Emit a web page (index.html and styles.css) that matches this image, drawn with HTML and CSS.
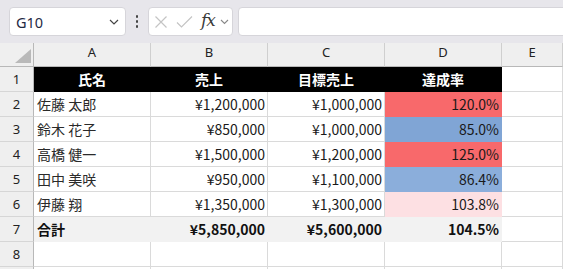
FILE: index.html
```html
<!DOCTYPE html>
<html lang="ja">
<head>
<meta charset="utf-8">
<title>Sheet</title>
<link rel="stylesheet" href="styles.css">
</head>
<body>
<div class="toolbar">
  <div class="namebox">
    <span class="ref">G10</span>
    <svg class="chev" width="10" height="6" viewBox="0 0 10 6"><path d="M1 1 L5 5 L9 1" fill="none" stroke="#444" stroke-width="1.2"/></svg>
  </div>
  <div class="dots"><span></span><span></span><span></span></div>
  <div class="fbtns">
    <svg class="ico" width="14" height="14" viewBox="0 0 14 14"><path d="M1.5 1.5 L12.5 12.5 M12.5 1.5 L1.5 12.5" stroke="#c4c4c4" stroke-width="1.2" fill="none"/></svg>
    <svg class="ico chk" width="17" height="14" viewBox="0 0 17 14"><path d="M1 7.5 L5.5 12 L16 1.5" stroke="#c4c4c4" stroke-width="1.2" fill="none"/></svg>
    <span class="fx">fx</span>
    <svg class="chev2" width="9" height="6" viewBox="0 0 9 6"><path d="M1 1 L4.5 4.5 L8 1" fill="none" stroke="#888" stroke-width="1.1"/></svg>
  </div>
  <div class="finput"></div>
</div>
<div class="grid">
  <div class="corner"><span class="tri"></span></div>
  <div class="ch">A</div><div class="ch">B</div><div class="ch">C</div><div class="ch">D</div><div class="ch">E</div>

  <div class="rh">1</div>
  <div class="c hd">氏名</div><div class="c hd">売上</div><div class="c hd">目標売上</div><div class="c hd">達成率</div><div class="c"></div>

  <div class="rh">2</div>
  <div class="c l">佐藤 太郎</div><div class="c r">¥1,200,000</div><div class="c r">¥1,000,000</div><div class="c r red">120.0%</div><div class="c"></div>

  <div class="rh">3</div>
  <div class="c l">鈴木 花子</div><div class="c r">¥850,000</div><div class="c r">¥1,000,000</div><div class="c r blue">85.0%</div><div class="c"></div>

  <div class="rh">4</div>
  <div class="c l">高橋 健一</div><div class="c r">¥1,500,000</div><div class="c r">¥1,200,000</div><div class="c r red">125.0%</div><div class="c"></div>

  <div class="rh">5</div>
  <div class="c l">田中 美咲</div><div class="c r">¥950,000</div><div class="c r">¥1,100,000</div><div class="c r blue2">86.4%</div><div class="c"></div>

  <div class="rh">6</div>
  <div class="c l">伊藤 翔</div><div class="c r">¥1,350,000</div><div class="c r">¥1,300,000</div><div class="c r pink">103.8%</div><div class="c"></div>

  <div class="rh">7</div>
  <div class="c l tot">合計</div><div class="c r tot">¥5,850,000</div><div class="c r tot">¥5,600,000</div><div class="c r tot">104.5%</div><div class="c"></div>

  <div class="rh">8</div>
  <div class="c"></div><div class="c"></div><div class="c"></div><div class="c"></div><div class="c"></div>

  <div class="rh"></div>
  <div class="c"></div><div class="c"></div><div class="c"></div><div class="c"></div><div class="c"></div>
</div>
</body>
</html>
```

FILE: styles.css
```css
html, body {
  margin: 0;
  padding: 0;
  background: #ffffff;
  overflow: hidden;
}
body {
  width: 563px;
  height: 269px;
  font-family: "Noto Sans CJK JP", "Noto Sans", sans-serif;
}
.toolbar {
  height: 43px;
  background: #e7e6eb;
  display: flex;
  align-items: center;
  padding-left: 9px;
  box-sizing: border-box;
}
.namebox {
  width: 117px;
  height: 29px;
  box-sizing: border-box;
  background: #fff;
  border: 1px solid #d6d5da;
  border-radius: 4px;
  display: flex;
  align-items: center;
  justify-content: space-between;
  padding: 0 6px 0 6px;
}
.ref {
  font-family: "Noto Sans", "Liberation Sans", sans-serif;
  font-size: 14.5px;
  color: #1f2a44;
}
.chev { margin-top: 1px; }
.dots {
  width: 22px;
  display: flex;
  flex-direction: column;
  align-items: center;
  gap: 2.5px;
}
.dots span {
  width: 2.5px;
  height: 2.5px;
  border-radius: 50%;
  background: #444;
}
.fbtns {
  width: 85px;
  height: 29px;
  box-sizing: border-box;
  background: #fff;
  border: 1px solid #d6d5da;
  border-radius: 4px;
  display: flex;
  align-items: center;
  padding-left: 5px;
}
.chk { margin-left: 8px; }
.fx {
  font-family: "DejaVu Serif", "Liberation Serif", serif;
  font-style: italic;
  font-size: 17px;
  color: #3a3a3a;
  margin-left: 8px;
  line-height: 1;
  margin-top: -2px;
  letter-spacing: -1px;
}
.chev2 { margin-left: 5px; margin-top: 1px; }
.finput {
  flex: 1;
  height: 29px;
  box-sizing: border-box;
  background: #fff;
  border: 1px solid #d6d5da;
  border-radius: 4px;
  margin-left: 5px;
  margin-right: -8px;
}
.grid {
  display: grid;
  grid-template-columns: 34px 117px 117px 117px 117px 1fr;
  grid-template-rows: 24px repeat(8, 25px) 4px;
}
.corner {
  background: #efefef;
  border-right: 1px solid #b8b8b8;
  border-bottom: 1px solid #b8b8b8;
  position: relative;
}
.tri {
  position: absolute;
  right: 2px;
  bottom: 3px;
  width: 0;
  height: 0;
  border-left: 16px solid transparent;
  border-bottom: 14px solid #b9b9b9;
}
.ch {
  background: #efefef;
  border-right: 1px solid #cfcfcf;
  border-bottom: 1px solid #b8b8b8;
  display: flex;
  align-items: center;
  justify-content: center;
  padding-bottom: 5px;
  box-sizing: border-box;
  font-family: "Noto Sans", "Liberation Sans", sans-serif;
  font-size: 13px;
  color: #222;
}
.rh {
  background: #efefef;
  border-right: 1px solid #b8b8b8;
  border-bottom: 1px solid #d6d6d6;
  display: flex;
  align-items: center;
  justify-content: center;
  font-family: "Noto Sans", "Liberation Sans", sans-serif;
  font-size: 13px;
  color: #222;
}
.c {
  border-right: 1px solid #dadada;
  border-bottom: 1px solid #dadada;
  display: flex;
  align-items: center;
  font-size: 14px;
  color: #1a1a1a;
  box-sizing: border-box;
  white-space: nowrap;
  overflow: hidden;
}
.l { padding-left: 3px; color: #2a2a2a; }
.r { justify-content: flex-end; padding-right: 2px; }
.hd {
  background: #000;
  border-color: #000;
  color: #fff;
  font-weight: bold;
  justify-content: center;
}
.red { background: #f8696b; border-color: #f8696b; }
.blue { background: #80a5d5; border-color: #80a5d5; }
.blue2 { background: #8baedb; border-color: #8baedb; }
.pink { background: #fde0e3; border-color: #fde0e3; }
.tot {
  background: #f2f2f2;
  border-color: #f2f2f2;
  font-weight: bold;
  color: #111;
}
```
